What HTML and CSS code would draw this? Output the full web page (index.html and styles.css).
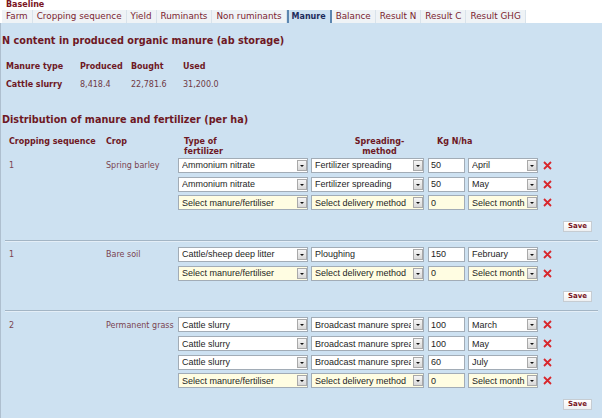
FILE: index.html
```html
<!DOCTYPE html>
<html lang="en">
<head>
<meta charset="utf-8">
<title>Manure</title>
<link rel="stylesheet" href="styles.css">
</head>
<body>
<header class="top">
  <div class="scenario">Baseline</div>
  <nav class="tabs">
    <a class="tab">Farm</a>
    <a class="tab">Cropping sequence</a>
    <a class="tab">Yield</a>
    <a class="tab">Ruminants</a>
    <a class="tab">Non ruminants</a>
    <a class="tab active">Manure</a>
    <a class="tab">Balance</a>
    <a class="tab">Result N</a>
    <a class="tab">Result C</a>
    <a class="tab">Result GHG</a>
  </nav>
</header>
<main class="panel">
  <h2>N content in produced organic manure (ab storage)</h2>
  <div class="mtable">
    <span class="th">Manure type</span><span class="th">Produced</span><span class="th">Bought</span><span class="th">Used</span>
    <span class="th">Cattle slurry</span><span>8,418.4</span><span>22,781.6</span><span>31,200.0</span>
  </div>

  <h2>Distribution of manure and fertilizer (per ha)</h2>
  <div class="dist-head cols">
    <span>Cropping sequence</span>
    <span>Crop</span>
    <span class="h-type">Type of<br>fertilizer</span>
    <span class="h-method">Spreading-<br>method</span>
    <span class="h-kg">Kg N/ha</span>
  </div>

  <section class="group first">
    <div class="cols rows">
      <span class="seq">1</span><span class="crop">Spring barley</span>
      <div class="sel type"><select><option>Ammonium nitrate</option></select><span class="arrow"></span></div>
      <div class="sel method"><select><option>Fertilizer spreading</option></select><span class="arrow"></span></div>
      <input class="kg" value="50">
      <div class="sel month"><select><option>April</option></select><span class="arrow"></span></div>
      <svg class="del" viewBox="0 0 9 9"><path d="M1 1L8 8M8 1L1 8"/></svg>

      <div class="sel type next"><select><option>Ammonium nitrate</option></select><span class="arrow"></span></div>
      <div class="sel method"><select><option>Fertilizer spreading</option></select><span class="arrow"></span></div>
      <input class="kg" value="50">
      <div class="sel month"><select><option>May</option></select><span class="arrow"></span></div>
      <svg class="del" viewBox="0 0 9 9"><path d="M1 1L8 8M8 1L1 8"/></svg>

      <div class="sel type next empty"><select><option>Select manure/fertiliser</option></select><span class="arrow"></span></div>
      <div class="sel method empty"><select><option>Select delivery method</option></select><span class="arrow"></span></div>
      <input class="kg empty" value="0">
      <div class="sel month empty"><select><option>Select month</option></select><span class="arrow"></span></div>
      <svg class="del" viewBox="0 0 9 9"><path d="M1 1L8 8M8 1L1 8"/></svg>
    </div>
    <div class="save-row"><button class="save">Save</button></div>
  </section>

  <section class="group">
    <div class="cols rows">
      <span class="seq">1</span><span class="crop">Bare soil</span>
      <div class="sel type"><select><option>Cattle/sheep deep litter</option></select><span class="arrow"></span></div>
      <div class="sel method"><select><option>Ploughing</option></select><span class="arrow"></span></div>
      <input class="kg" value="150">
      <div class="sel month"><select><option>February</option></select><span class="arrow"></span></div>
      <svg class="del" viewBox="0 0 9 9"><path d="M1 1L8 8M8 1L1 8"/></svg>

      <div class="sel type next empty"><select><option>Select manure/fertiliser</option></select><span class="arrow"></span></div>
      <div class="sel method empty"><select><option>Select delivery method</option></select><span class="arrow"></span></div>
      <input class="kg empty" value="0">
      <div class="sel month empty"><select><option>Select month</option></select><span class="arrow"></span></div>
      <svg class="del" viewBox="0 0 9 9"><path d="M1 1L8 8M8 1L1 8"/></svg>
    </div>
    <div class="save-row"><button class="save">Save</button></div>
  </section>

  <section class="group">
    <div class="cols rows">
      <span class="seq">2</span><span class="crop">Permanent grass</span>
      <div class="sel type"><select><option>Cattle slurry</option></select><span class="arrow"></span></div>
      <div class="sel method"><select><option>Broadcast manure spreader</option></select><span class="arrow"></span></div>
      <input class="kg" value="100">
      <div class="sel month"><select><option>March</option></select><span class="arrow"></span></div>
      <svg class="del" viewBox="0 0 9 9"><path d="M1 1L8 8M8 1L1 8"/></svg>

      <div class="sel type next"><select><option>Cattle slurry</option></select><span class="arrow"></span></div>
      <div class="sel method"><select><option>Broadcast manure spreader</option></select><span class="arrow"></span></div>
      <input class="kg" value="100">
      <div class="sel month"><select><option>May</option></select><span class="arrow"></span></div>
      <svg class="del" viewBox="0 0 9 9"><path d="M1 1L8 8M8 1L1 8"/></svg>

      <div class="sel type next"><select><option>Cattle slurry</option></select><span class="arrow"></span></div>
      <div class="sel method"><select><option>Broadcast manure spreader</option></select><span class="arrow"></span></div>
      <input class="kg" value="60">
      <div class="sel month"><select><option>July</option></select><span class="arrow"></span></div>
      <svg class="del" viewBox="0 0 9 9"><path d="M1 1L8 8M8 1L1 8"/></svg>

      <div class="sel type next empty"><select><option>Select manure/fertiliser</option></select><span class="arrow"></span></div>
      <div class="sel method empty"><select><option>Select delivery method</option></select><span class="arrow"></span></div>
      <input class="kg empty" value="0">
      <div class="sel month empty"><select><option>Select month</option></select><span class="arrow"></span></div>
      <svg class="del" viewBox="0 0 9 9"><path d="M1 1L8 8M8 1L1 8"/></svg>
    </div>
    <div class="save-row"><button class="save">Save</button></div>
  </section>
</main>
</body>
</html>
```

FILE: styles.css
```css
* { box-sizing: border-box; }
html, body { margin: 0; padding: 0; }
body {
  width: 602px;
  height: 418px;
  overflow: hidden;
  background: #fff;
  font-family: "DejaVu Sans", Verdana, sans-serif;
  color: #6f3a44;
}

/* header + tabs */
.top { height: 23px; }
.scenario {
  font-size: 8px;
  font-weight: bold;
  line-height: 10px;
  padding-left: 6px;
  color: #7a1522;
}
.tabs {
  display: flex;
  height: 13px;
  margin-left: 2px;
}
.tab {
  font-size: 8.8px;
  line-height: 13px;
  padding: 0 4px;
  background: #eff3f6;
  border-right: 1px solid #d9e3eb;
  color: #7b2430;
  white-space: nowrap;
}
.tab.active {
  background: #cde1f1;
  border-left: 2px solid #5b86b0;
  border-right: 2px solid #5b86b0;
  font-size: 8px;
  font-weight: bold;
  color: #1d2b5c;
  padding: 0 4px 0 3px;
}

/* panel */
.panel {
  background: #cde1f1;
  border-left: 1px solid #aebfcf;
  height: 395px;
  padding-top: 11.5px;
}
h2 {
  margin: 0;
  padding-left: 1px;
  font-size: 9.7px;
  line-height: 12px;
  color: #6e1824;
}

.mtable {
  display: grid;
  grid-template-columns: 74px 51px 52px auto;
  row-gap: 8.5px;
  padding-left: 5px;
  margin: 15px 0 24px;
  font-size: 8px;
  line-height: 10px;
}
.th { font-weight: bold; color: #6e1824; }

/* distribution grid */
.cols {
  display: grid;
  grid-template-columns: 97px 72px 133px 117px 40px 75px auto;
  align-items: center;
}
.dist-head {
  margin: 11px 4px 0;
  padding-left: 4px;
  font-size: 8px;
  font-weight: bold;
  line-height: 9.5px;
  color: #6e1824;
  align-items: start;
}
.h-type { padding-left: 6px; }
.h-method { text-align: center; padding-left: 20px; }
.h-kg { padding-left: 9px; white-space: nowrap; }

.group {
  margin: 0 4px;
  padding: 5.5px 6px 8px 4px;
  border-bottom: 1px solid #a3b5c5;
  box-shadow: 0 1px 0 #e4eef7;
}
.group.first { padding-top: 1px; }
.rows {
  row-gap: 3.5px;
  font-size: 8px;
  line-height: 15px;
}
.seq, .crop { color: #7a4450; padding-top: 1px; }
.next { grid-column: 3; }

.sel { position: relative; height: 15px; }
.sel.type { width: 130px; }
.sel.method { width: 113px; }
.sel.month { width: 70px; }
.sel select {
  -webkit-appearance: none;
  appearance: none;
  display: block;
  width: 100%;
  height: 15px;
  margin: 0;
  padding: 0 12px 0 3px;
  border: 1px solid #a2acb6;
  border-radius: 0;
  background: #fff;
  font: 9px "Liberation Sans", Arial, sans-serif;
  color: #1e1e1e;
  outline: none;
}
.sel.empty select, .kg.empty { background: #fffde2; }
.arrow {
  position: absolute;
  right: 1px;
  top: 2px;
  width: 10px;
  height: 11px;
  border: 1px solid #a9a9a9;
  background: linear-gradient(#f6f6f6, #d8d8d8);
}
.arrow::after {
  content: "";
  position: absolute;
  left: 2px;
  top: 4px;
  border-left: 2.5px solid transparent;
  border-right: 2.5px solid transparent;
  border-top: 2.5px solid #111;
}
.kg {
  width: 37px;
  height: 15px;
  margin: 0;
  padding: 0 2px;
  border: 1px solid #a2acb6;
  border-radius: 0;
  background: #fff;
  font: 9px "Liberation Sans", Arial, sans-serif;
  color: #1e1e1e;
  outline: none;
}
.del {
  width: 9px;
  height: 9px;
  display: block;
}
.del path {
  stroke: #d8262c;
  stroke-width: 1.8;
  fill: none;
}

.save-row {
  display: flex;
  justify-content: flex-end;
  margin-top: 10.5px;
}
.save {
  width: 29px;
  height: 11px;
  padding: 0;
  margin: 0;
  border: 1px solid #c6ccd2;
  border-radius: 0;
  background: linear-gradient(#ffffff, #eef0f2);
  font: bold 7px "DejaVu Sans", Verdana, sans-serif;
  line-height: 9px;
  color: #7a1522;
}
```
